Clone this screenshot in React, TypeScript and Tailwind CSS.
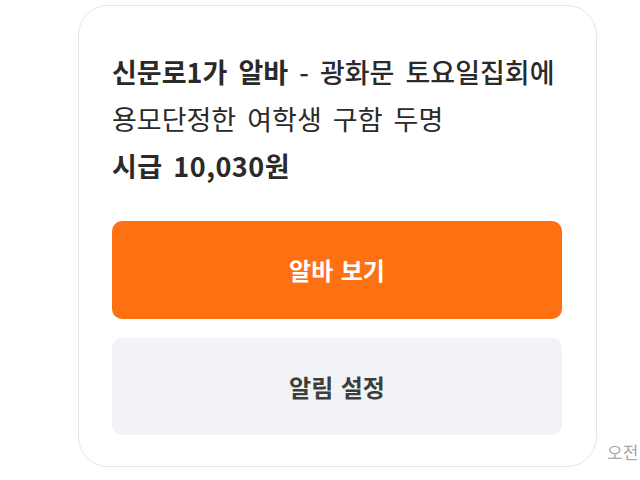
export default function App() {
  const font = { fontFamily: '"Noto Sans CJK KR", "Noto Sans", sans-serif' };
  return (
    <div className="w-[640px] h-[480px] bg-white overflow-hidden relative" style={font}>
      <div className="flex items-end pl-[78px] pt-[5px]">
        <div className="w-[519px] h-[462px] rounded-[30px] border border-[#e6e6e6] bg-white pl-[33px] pr-[20px] pt-[42px] flex flex-col shrink-0">
          <div className="text-[27px] leading-[47px] text-[#2a2a2a] font-medium whitespace-nowrap [word-spacing:5px]">
            <span className="font-bold">신문로1가 알바</span>
            <span> - 광화문 토요일집회에</span>
            <br />
            <span className="font-normal">용모단정한 여학생 구함 두명</span>
          </div>
          <div className="text-[27px] leading-[47px] font-semibold text-[#2a2a2a] tracking-[0.5px] [word-spacing:4px]">시급 10,030원</div>
          <div className="mt-[32px] mr-[14px] h-[98px] rounded-[10px] bg-[#fe7113] flex items-center justify-center text-white text-[24px] font-bold [word-spacing:2px]">
            알바 보기
          </div>
          <div className="mt-[19px] mr-[14px] h-[97px] rounded-[10px] bg-[#f1f3f6] flex items-center justify-center text-[#3d3d3d] text-[24px] font-bold [word-spacing:2px]">
            알림 설정
          </div>
        </div>
        <div className="ml-[10px] mb-[3px] text-[17px] text-[#a8a8a8] whitespace-nowrap">오전 10:30</div>
      </div>
    </div>
  );
}
